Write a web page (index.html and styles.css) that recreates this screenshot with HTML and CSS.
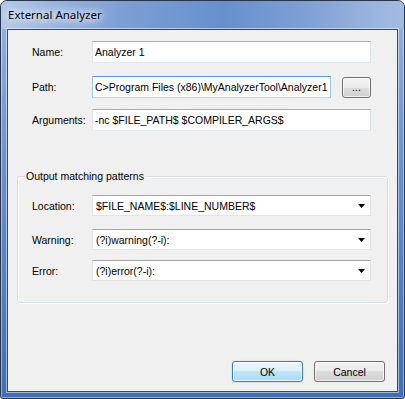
FILE: index.html
```html
<!DOCTYPE html>
<html lang="en">
<head>
    <meta charset="UTF-8">
    <meta name="viewport" content="width=device-width, initial-scale=1.0">
    <title>External Analyzer</title>
    <link rel="stylesheet" href="styles.css">
</head>
<body>
    <div class="window">
        <div class="titlebar">
            <span class="title">External Analyzer</span>
        </div>

        <div class="client">
            <div class="row row-name">
                <span class="label">Name:</span>
                <div class="textbox wide">Analyzer 1</div>
            </div>
            <div class="row row-path">
                <span class="label">Path:</span>
                <div class="textbox path focused">C&gt;Program Files (x86)\MyAnalyzerTool\Analyzer1</div>
                <button class="btn browse">...</button>
            </div>
            <div class="row row-args">
                <span class="label">Arguments:</span>
                <div class="textbox wide">-nc $FILE_PATH$ $COMPILER_ARGS$</div>
            </div>

            <div class="group">
                <div class="group-title">Output matching patterns</div>
                <div class="row row-location">
                    <span class="label">Location:</span>
                    <div class="combo">
                        <span class="combo-text">$FILE_NAME$:$LINE_NUMBER$</span>
                        <svg class="arrow" width="7" height="4" viewBox="0 0 7 4"><polygon points="0,0 7,0 3.5,4" fill="#000"/></svg>
                    </div>
                </div>
                <div class="row row-warning">
                    <span class="label">Warning:</span>
                    <div class="combo">
                        <span class="combo-text">(?i)warning(?-i):</span>
                        <svg class="arrow" width="7" height="4" viewBox="0 0 7 4"><polygon points="0,0 7,0 3.5,4" fill="#000"/></svg>
                    </div>
                </div>
                <div class="row row-error">
                    <span class="label">Error:</span>
                    <div class="combo">
                        <span class="combo-text">(?i)error(?-i):</span>
                        <svg class="arrow" width="7" height="4" viewBox="0 0 7 4"><polygon points="0,0 7,0 3.5,4" fill="#000"/></svg>
                    </div>
                </div>
            </div>

            <div class="actions">
                <button class="btn default">OK</button>
                <button class="btn">Cancel</button>
            </div>
        </div>
    </div>
</body>
</html>
```

FILE: styles.css
```css
* {
    box-sizing: border-box;
}
body {
    margin: 0;
    padding: 0;
    background: #ffffff;
    font-family: "Liberation Sans", Arial, sans-serif;
    font-size: 10.5px;
    color: #000;
}
.window {
    width: 405px;
    height: 399px;
    border: 1px solid #27344d;
    border-radius: 7px 7px 3px 3px;
    background: linear-gradient(#98b4de, #6a92cc 40%, #3f6eb5);
    box-shadow: inset 0 0 0 1px rgba(255, 255, 255, 0.45);
    overflow: hidden;
}
.titlebar {
    height: 28px;
    padding-left: 7px;
    line-height: 28px;
    background: linear-gradient(to right, #b3c9e8 0%, #9bb6df 12%, #7c9fd4 30%, #6690cc 55%, #7d9fd4 75%, #93afdb 88%, #a3bce1 100%);
    border-radius: 6px 6px 0 0;
}
.title {
    font-family: "Noto Sans", "Liberation Sans", sans-serif;
    font-size: 11.5px;
    color: #000;
    text-shadow: 0 0 6px #fff, 0 0 10px #fff, 0 0 14px #fff;
}
.client {
    margin: 0 6px;
    height: 363px;
    border: 1px solid #34476a;
    background: #f0f0f0;
    box-shadow: 0 0 0 1px rgba(255, 255, 255, 0.5);
    display: flex;
    flex-direction: column;
    padding: 0 26px 9px 24px;
}
.row {
    display: flex;
    align-items: center;
}
.label {
    width: 60px;
    flex: none;
}
.row-name {
    margin-top: 11px;
}
.row-path {
    margin-top: 13px;
}
.row-args {
    margin-top: 11px;
}
.textbox {
    height: 22px;
    line-height: 20px;
    padding-left: 2px;
    background: #fff;
    border: 1px solid;
    border-color: #abadb3 #dbdfe6 #e3e9ef #e2e3ea;
    white-space: nowrap;
    overflow: hidden;
}
.textbox.wide {
    flex: 1;
}
.textbox.path {
    width: 239px;
}
.textbox.focused {
    border-color: #5a9ad6 #9cc6ea #b7d9ed #9cc6ea;
}
.btn {
    font-family: "Liberation Sans", Arial, sans-serif;
    font-size: 10.5px;
    color: #000;
    height: 21px;
    padding: 0;
    border: 1px solid #707070;
    border-radius: 3px;
    background: linear-gradient(#f2f2f2 0%, #ebebeb 50%, #dddddd 50%, #cfcfcf 100%);
    box-shadow: inset 0 0 0 1px rgba(255, 255, 255, 0.7);
}
.btn.browse {
    width: 29px;
    margin-left: 11px;
    line-height: 15px;
}
.btn.default {
    border-color: #3c7fb1;
    background: linear-gradient(#eaf6fd 0%, #d9f0fc 50%, #bee6fd 50%, #a7d9f5 100%);
    box-shadow: inset 0 0 0 1px rgba(255, 255, 255, 0.8), 0 0 2px rgba(60, 160, 230, 0.4);
}
.group {
    margin: 45px -17px 0 -15px;
    border: 1px solid #d5dfe5;
    border-radius: 3px;
    box-shadow: inset 1px 1px 0 #fff, 1px 1px 0 #fff;
    padding: 0 16px 21px 14px;
}
.group-title {
    width: max-content;
    margin: -7px 0 0 -7px;
    padding: 0 1px;
    line-height: 13px;
    background: #f0f0f0;
}
.row-location {
    margin-top: 12px;
}
.row-warning {
    margin-top: 13px;
}
.row-error {
    margin-top: 10px;
}
.combo {
    flex: 1;
    height: 21px;
    display: flex;
    align-items: center;
    padding: 0 5px 0 3px;
    background: #fff;
    border: 1px solid;
    border-color: #a5a5a5 #e3e3e3 #e3e3e3 #e3e3e3;
}
.combo-text {
    flex: 1;
    white-space: nowrap;
}
.arrow {
    flex: none;
    display: block;
}
.actions {
    margin-top: auto;
    display: flex;
    justify-content: flex-end;
    gap: 11px;
    margin-right: -14px;
}
.actions .btn {
    width: 71px;
}
```
